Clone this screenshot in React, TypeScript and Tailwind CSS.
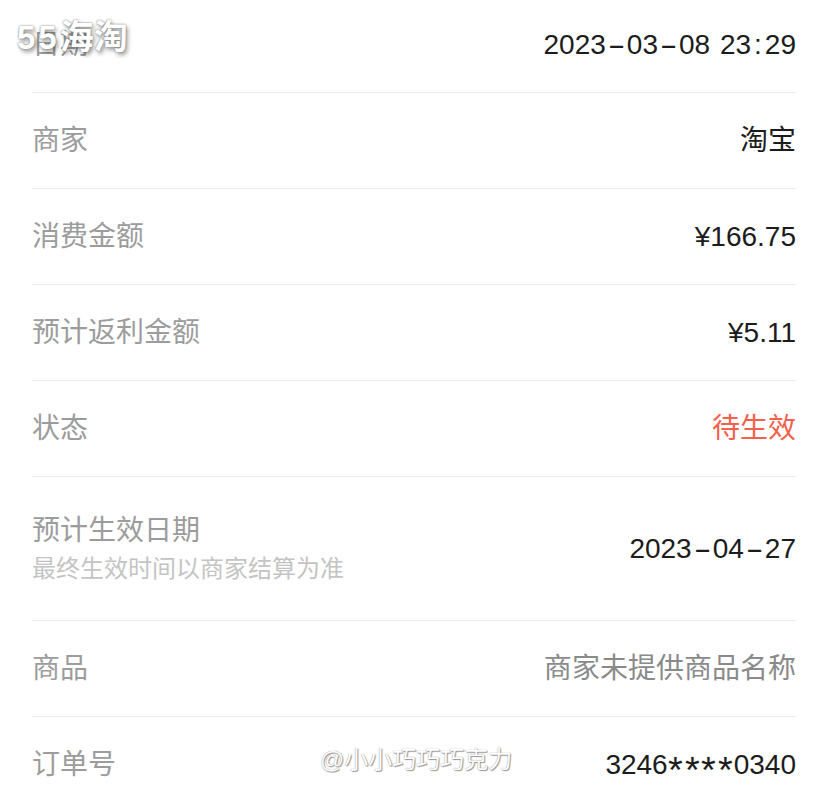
import React from 'react';

interface Row {
    label: string;
    value: string;
    hint?: string;
    valueClass?: string;
}

const rows: Row[] = [
    { label: '日期', value: '2023-03-08 23:29' },
    { label: '商家', value: '淘宝' },
    { label: '消费金额', value: '¥166.75' },
    { label: '预计返利金额', value: '¥5.11' },
    { label: '状态', value: '待生效', valueClass: 'text-[#f4604a]' },
    { label: '预计生效日期', value: '2023-04-27', hint: '最终生效时间以商家结算为准' },
    { label: '商品', value: '商家未提供商品名称', valueClass: 'text-[#8a8a8a]' },
    { label: '订单号', value: '3246****0340' },
];

const font = { fontFamily: '"Liberation Sans", "Noto Sans CJK SC", sans-serif' };

// the original's font draws dashes, asterisks and colons wider than Arial does
const Value: React.FC<{ text: string }> = ({ text }) => (
    <>
        {text.split('').map((ch, i) => {
            if (ch === '-')
                return (
                    <span key={i} className="inline-block w-[21px] text-center">
                        <span className="inline-block scale-x-[1.9]">-</span>
                    </span>
                );
            if (ch === '*')
                return (
                    <span key={i} className="inline-block w-[16.5px] text-center">
                        <span className="inline-block scale-[1.35] origin-top">*</span>
                    </span>
                );
            if (ch === ':') return <span key={i} className="mx-[3px]">:</span>;
            if (ch === ' ') return <span key={i} className="mr-[2px]"> </span>;
            return ch;
        })}
    </>
);

export default function App() {
    return (
        <div className="relative w-[828px] h-[796px] overflow-hidden bg-white" style={font}>
            <div className="mx-8 -mt-[3px]">
                {rows.map((r, i) => (
                    <div
                        key={i}
                        className={`flex items-center justify-between border-b border-[#ebebeb] ${r.hint ? 'h-36' : 'h-24'}`}
                    >
                        <div className="flex flex-col">
                            <span className="text-[28px] leading-[36px] text-[#9c9c9c]">{r.label}</span>
                            {r.hint && (
                                <span className="mt-1 text-[24px] leading-[32px] text-[#c4c4c4]">{r.hint}</span>
                            )}
                        </div>
                        <span className={`whitespace-pre text-[28px] leading-[36px] ${r.valueClass ?? 'text-[#1c1c1c]'}`}>
                            <Value text={r.value} />
                        </span>
                    </div>
                ))}
            </div>

            {/* watermarks */}
            <div className="absolute left-[17px] top-[12px] flex items-baseline font-bold text-white [text-shadow:0_0_2px_#666,2px_3px_4px_rgba(0,0,0,0.4)]">
                <span className="text-[33px] tracking-[3px]">55</span>
                <span className="text-[34px]">海淘</span>
            </div>
            <div className="absolute left-[320px] top-[742px] text-[24px] text-white [text-shadow:0_0_1px_#777,1px_1px_1px_#999]">
                @小小巧巧巧克力
            </div>
        </div>
    );
}
